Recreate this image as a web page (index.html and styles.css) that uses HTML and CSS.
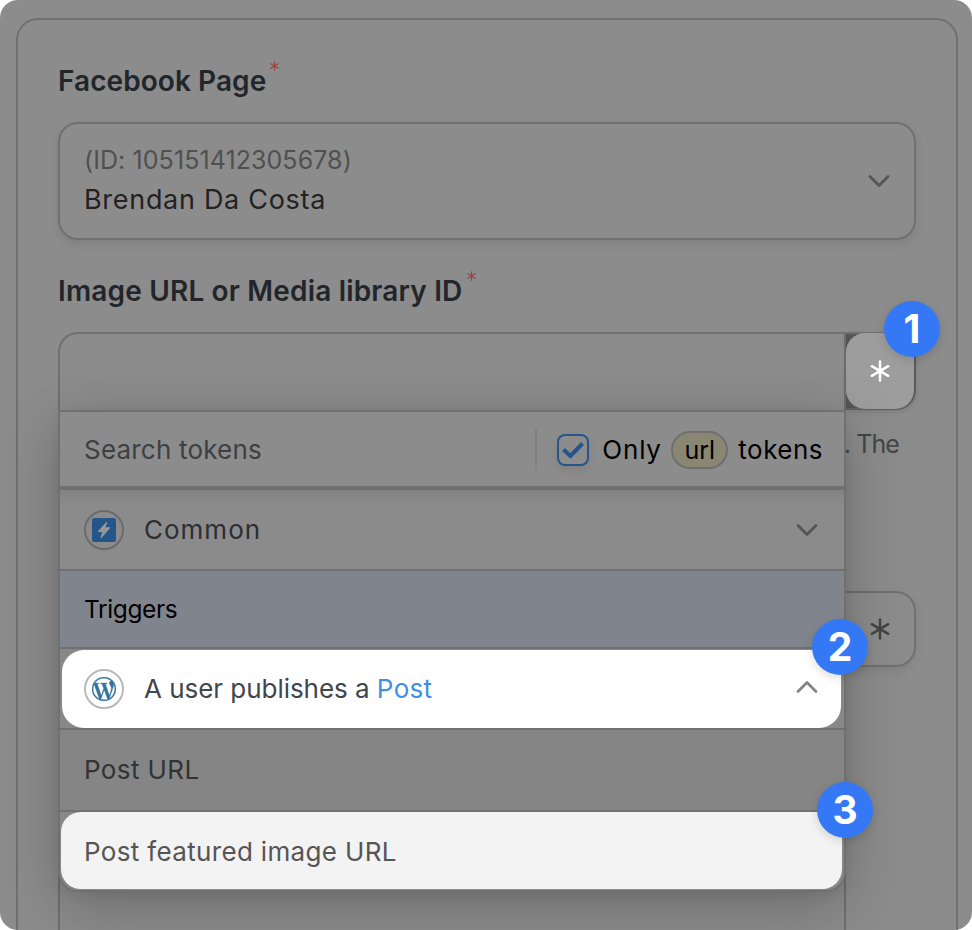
FILE: index.html
```
<!DOCTYPE html>
<html lang="en">
<head>
<meta charset="utf-8">
<title>Facebook Page fields</title>
<link rel="stylesheet" href="styles.css">
</head>
<body>
<svg class="defs" width="0" height="0" aria-hidden="true">
  <symbol id="asterisk" viewBox="0 0 20 22"><path d="M10 1.5v19M1.8 6.2l16.4 9.6M18.2 6.2L1.8 15.8" fill="none" stroke="currentColor" stroke-width="2.5" stroke-linecap="round"/></symbol>
  <symbol id="chevron" viewBox="0 0 24 14"><path d="M3 2.5l9 9 9-9" fill="none" stroke="currentColor" stroke-width="2.8" stroke-linecap="round" stroke-linejoin="round"/></symbol>
</svg>
<main class="stage">
  <section class="card">
    <h2 class="label"><span class="label-page">Facebook Page</span><svg class="required"><use href="#asterisk"/></svg></h2>
    <div class="select">
      <div class="select-text">
        <span class="select-id">(ID: 105151412305678)</span>
        <span class="select-name">Brendan Da Costa</span>
      </div>
      <svg class="chevron"><use href="#chevron"/></svg>
    </div>

    <h2 class="label"><span class="label-image">Image URL or Media library ID</span><svg class="required"><use href="#asterisk"/></svg></h2>
    <div class="token-field">
      <div class="token-input"></div>
      <div class="token-slot">
        <button class="token-button active"><svg class="asterisk"><use href="#asterisk"/></svg></button>
      </div>
      <span class="badge badge-one">1</span>

      <div class="popover">
        <div class="search">
          <span class="search-text">Search tokens</span>
          <div class="filter">
            <span class="checkbox"><svg viewBox="0 0 24 18"><path d="M2.5 8.5l7 6.5L21.5 2.5" fill="none" stroke="currentColor" stroke-width="4"/></svg></span>
            <span class="only">Only</span>
            <span class="pill">url</span>
            <span class="tokens">tokens</span>
          </div>
        </div>
        <div class="row common">
          <span class="icon-ring"><svg viewBox="0 0 24 24"><rect width="24" height="24" rx="2.5" fill="#24568c"/><path d="M14.8 4L6.2 13.5h4.7L8.9 20l9-10.2h-5z" fill="#979797" stroke="#979797" stroke-linejoin="round"/></svg></span>
          <span class="row-text common-text">Common</span>
          <svg class="chevron"><use href="#chevron"/></svg>
        </div>
        <div class="row triggers"><span>Triggers</span></div>
        <div class="row trigger">
          <div class="spotlight">
            <span class="icon-ring light"><svg viewBox="0 0 24 24"><path fill="#34739c" stroke="#34739c" stroke-width=".3" d="M21.469 6.825c.84 1.537 1.318 3.3 1.318 5.175 0 3.979-2.156 7.456-5.363 9.325l3.295-9.527c.615-1.54.82-2.771.82-3.864 0-.405-.026-.78-.07-1.11m-7.981.105c.647-.03 1.232-.105 1.232-.105.582-.075.514-.93-.067-.899 0 0-1.755.135-2.88.135-1.064 0-2.85-.15-2.85-.15-.585-.03-.661.855-.075.885 0 0 .54.061 1.125.09l1.68 4.605-2.37 7.08L5.354 6.9c.649-.03 1.234-.1 1.234-.1.585-.075.516-.93-.065-.896 0 0-1.746.138-2.874.138-.2 0-.438-.008-.69-.015C4.911 3.15 8.235 1.215 12 1.215c2.809 0 5.365 1.072 7.286 2.833-.046-.003-.091-.009-.141-.009-1.06 0-1.812.923-1.812 1.914 0 .89.513 1.643 1.06 2.531.411.72.89 1.643.89 2.977 0 .915-.354 1.994-.821 3.479l-1.075 3.585-3.9-11.61.001.014zM12 22.784c-1.059 0-2.081-.153-3.048-.437l3.237-9.406 3.315 9.087c.024.053.05.101.078.149-1.12.393-2.325.609-3.582.609M1.211 12c0-1.564.336-3.05.935-4.39L7.29 21.709C3.694 19.96 1.212 16.271 1.211 12M12 0C5.385 0 0 5.385 0 12s5.385 12 12 12 12-5.385 12-12S18.615 0 12 0"/></svg></span>
            <span class="row-text trigger-text">A user publishes a <span class="link">Post</span></span>
            <svg class="chevron up"><use href="#chevron"/></svg>
          </div>
          <span class="badge badge-two">2</span>
        </div>
        <div class="row option"><span>Post URL</span></div>
        <div class="row featured">
          <div class="spotlight">
            <span class="featured-text">Post featured image URL</span>
          </div>
          <span class="badge badge-three">3</span>
        </div>
      </div>
    </div>
    <p class="help">. The</p>

    <div class="token-field lower">
      <div class="token-input tall"></div>
      <button class="token-button"><svg class="asterisk"><use href="#asterisk"/></svg></button>
    </div>
  </section>
</main>
</body>
</html>
```
FILE: styles.css
```
* {
  box-sizing: border-box;
}

body {
  margin: 0;
  background: #fff;
  font-family: Inter, "Liberation Sans", sans-serif;
  font-size: 26px;
  color: #000;
}

.defs {
  display: block;
  height: 0;
}

svg {
  flex: none;
}

.stage {
  width: 972px;
  height: 930px;
  padding: 18px 14px 0 16px;
  overflow: hidden;
  border-radius: 18px;
  background: #8c8c8c;
}

.card {
  height: 960px;
  padding: 40px;
  border: 2px solid #707070;
  border-radius: 22px;
}

.label {
  display: flex;
  gap: 5px;
  height: 40px;
  margin: 0;
  font-size: 28px;
  font-weight: 600;
  line-height: 43px;
  color: #22262b;
}

.label-page {
  letter-spacing: 0.07px;
}

.label-image {
  letter-spacing: 0.17px;
}

.required {
  width: 9px;
  height: 10px;
  margin: 1px 0 0 -1px;
  color: #974340;
}

.select {
  display: flex;
  align-items: center;
  justify-content: space-between;
  height: 118px;
  margin: 22px 0 30px;
  padding: 0 23px 0 24px;
  border: 2px solid #707070;
  border-radius: 20px;
  box-shadow: 0 4px 10px rgba(0, 0, 0, 0.09);
}

.select-text {
  display: flex;
  flex-direction: column;
  padding-bottom: 2px;
  line-height: 39px;
}

.select-id {
  font-size: 25px;
  letter-spacing: 0.08px;
  color: #505050;
}

.select-name {
  font-size: 27px;
  letter-spacing: 0.7px;
  color: #222;
}

.chevron {
  width: 24px;
  height: 14px;
  color: #555;
}

.chevron.up {
  margin-bottom: 3px;
  color: #858585;
  transform: rotate(180deg);
}

.token-field {
  position: relative;
  display: flex;
  height: 78px;
  margin-top: 22px;
}

.token-input {
  width: 788px;
  border: 2px solid #707070;
  border-bottom: 0;
  border-radius: 20px 0 0 0;
}

.token-input.tall {
  height: 400px;
}

.token-slot {
  width: 70px;
  height: 78px;
  border-top: 2px solid #707070;
  border-right: 1px solid #606060;
  border-bottom: 2px solid #606060;
  border-radius: 0 20px 20px 0;
  background: #555;
  box-shadow: 0 2px 5px rgba(0, 0, 0, 0.12);
}

.token-button {
  display: flex;
  align-items: center;
  justify-content: center;
  width: 70px;
  height: 76px;
  padding: 0;
  border: 2px solid #707070;
  border-left: 0;
  border-radius: 0 20px 20px 0;
  background: none;
  color: #444;
  box-shadow: 0 4px 10px rgba(0, 0, 0, 0.08);
}

.token-button.active {
  width: 68px;
  margin: -1px 0 0;
  border: 0;
  border-radius: 19px;
  background: #9d9d9d;
  color: #fff;
  box-shadow: none;
}

.asterisk {
  width: 20px;
  height: 22px;
}

.help {
  display: flex;
  justify-content: flex-end;
  height: 40px;
  margin: 12px 0 0;
  padding-right: 17px;
  font-size: 25px;
  line-height: 44px;
  letter-spacing: -0.9px;
  color: #454545;
}

.lower {
  margin-top: 129px;
}

.popover {
  position: absolute;
  top: 78px;
  left: 0;
  z-index: 1;
  width: 788px;
  height: 482px;
  border: 2px solid #707070;
  border-radius: 0 0 20px 20px;
  background: #888;
  box-shadow: 0 14px 60px rgba(0, 0, 0, 0.23), 0 4px 12px rgba(0, 0, 0, 0.06);
}

.search {
  display: flex;
  align-items: center;
  justify-content: space-between;
  height: 78px;
  padding: 0 21px 0 24px;
  border-bottom: 4px solid #707070;
  background: #8c8c8c;
}

.search-text {
  letter-spacing: 0.2px;
  color: #3d4043;
}

.filter {
  display: flex;
  align-items: center;
  height: 42px;
  padding-top: 1px;
  padding-left: 20px;
  border-left: 2px solid #808080;
}

.checkbox {
  display: flex;
  align-items: center;
  justify-content: center;
  width: 32px;
  height: 32px;
  margin-right: 13px;
  border: 2px solid #24568c;
  border-radius: 8px;
  color: #24568c;
  box-shadow: 0 4px 8px rgba(0, 0, 0, 0.08);
}

.checkbox svg {
  width: 24px;
  height: 18px;
}

.only {
  width: 69px;
  letter-spacing: 0.77px;
}

.pill {
  width: 57px;
  height: 38px;
  margin-right: 10px;
  border: 2px solid #6f6f6f;
  border-radius: 19px;
  background: #898773;
  font-size: 25px;
  line-height: 35px;
  text-align: center;
}

.tokens {
  letter-spacing: 0.48px;
}

.row {
  display: flex;
  align-items: center;
  border-bottom: 2px solid #707070;
}

.common {
  height: 81px;
  padding: 0 25px 0 24px;
  background: linear-gradient(#828282, #8b8b8b 14px);
}

.icon-ring {
  display: flex;
  align-items: center;
  justify-content: center;
  width: 40px;
  height: 40px;
  border: 2px solid #6a6a6a;
  border-radius: 50%;
}

.icon-ring.light {
  border-color: #b9b9b9;
}

.icon-ring svg {
  width: 24px;
  height: 24px;
}

.row-text {
  flex: 1;
  margin-left: 20px;
}

.common-text {
  letter-spacing: 1px;
  color: #2b2e32;
}

.triggers {
  height: 78px;
  padding-left: 24px;
  background: #80858d;
  font-size: 24.5px;
  letter-spacing: -0.4px;
}

.trigger {
  position: relative;
  height: 81px;
  padding: 0 3px 0 2px;
}

.spotlight {
  display: flex;
  flex: 1;
  align-items: center;
}

.trigger .spotlight {
  height: 78px;
  padding: 0 22px 0 22px;
  border-radius: 22px;
  background: #fff;
}

.trigger-text {
  letter-spacing: -0.04px;
  color: #41464d;
}

.link {
  color: #418fe2;
  letter-spacing: 0.3px;
}

.option {
  height: 82px;
  padding: 0 0 2px 24px;
  background: #858585;
  letter-spacing: 0.4px;
  color: #333;
}

.featured {
  position: relative;
  height: 78px;
  padding: 0 2px 1px 1px;
  border-bottom: 0;
}

.featured .spotlight {
  height: 77px;
  padding: 2px 0 0 23px;
  border-radius: 20px;
  background: #f3f3f3;
}

.featured-text {
  letter-spacing: 0.34px;
  color: #555;
}

.badge {
  position: absolute;
  z-index: 2;
  width: 56px;
  height: 56px;
  border-radius: 50%;
  background: #3478f6;
  color: #fff;
  font-size: 39px;
  font-weight: 700;
  line-height: 55px;
  text-align: center;
  box-shadow: 0 3px 10px rgba(0, 0, 0, 0.14);
}

.badge-one {
  top: -31px;
  left: 826px;
}

.badge-two {
  top: -30px;
  left: 752px;
}

.badge-three {
  top: -30px;
  left: 757px;
}
```
